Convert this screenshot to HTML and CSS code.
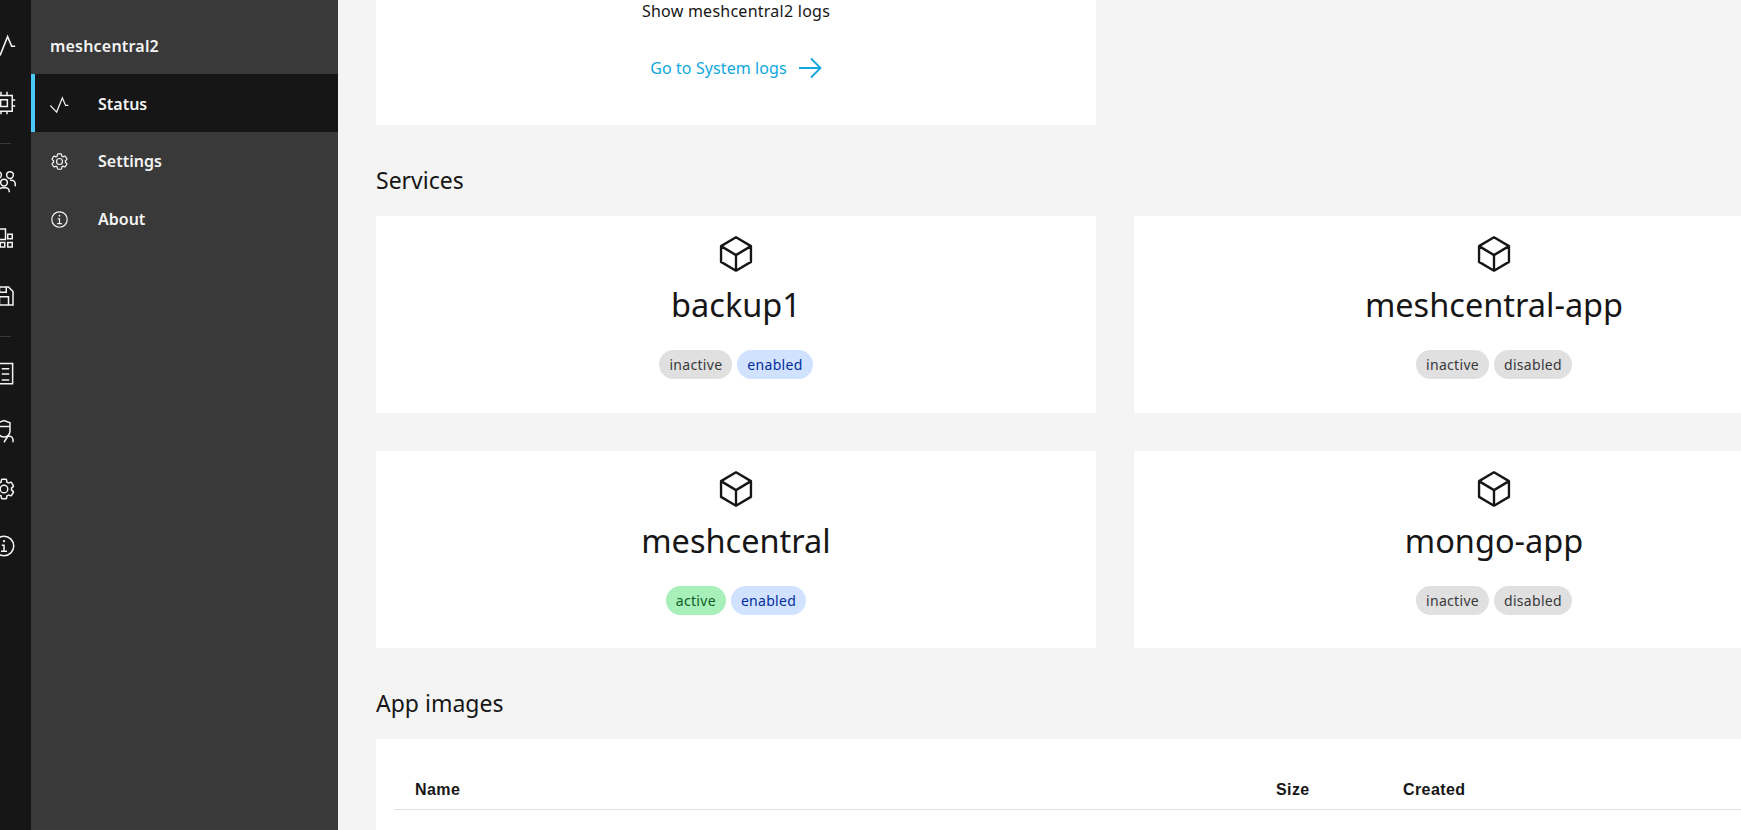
FILE: index.html
```html
<!DOCTYPE html>
<html lang="en">
<head>
<meta charset="utf-8">
<title>meshcentral2</title>
<link rel="stylesheet" href="styles.css">
</head>
<body>
<svg class="defs" width="0" height="0" aria-hidden="true">
  <symbol id="cube" viewBox="0 0 32 32"><path d="M16 1.200 29.300 9V23L16 30.800 2.700 23V9Z M2.700 9 16 17 29.300 9 M16 17V30.800" fill="none" stroke="currentColor" stroke-width="2.100" stroke-linejoin="round"/></symbol>
  <symbol id="activity" viewBox="0 0 20 20"><path d="M0.300 11 7 18 13 3 16.400 11 19.300 11" fill="none" stroke="currentColor" stroke-width="1.300"/></symbol>
  <symbol id="gear" viewBox="0 0 32 32"><path fill="currentColor" d="M27,16.76c0-.25,0-.5,0-.76s0-.51,0-.77l1.92-1.68A2,2,0,0,0,29.3,11L26.94,7a2,2,0,0,0-1.73-1,2,2,0,0,0-.64.1l-2.43.82a11.35,11.35,0,0,0-1.31-.75l-.51-2.52a2,2,0,0,0-2-1.61H13.64a2,2,0,0,0-2,1.61l-.51,2.52a11.48,11.48,0,0,0-1.32.75L7.43,6.06A2,2,0,0,0,6.79,6,2,2,0,0,0,5.06,7L2.7,11a2,2,0,0,0,.41,2.51L5,15.24c0,.25,0,.5,0,.76s0,.51,0,.77L3.11,18.45A2,2,0,0,0,2.7,21L5.06,25a2,2,0,0,0,1.73,1,2,2,0,0,0,.64-.1l2.43-.82a11.35,11.35,0,0,0,1.31.75l.51,2.52a2,2,0,0,0,2,1.61h4.72a2,2,0,0,0,2-1.61l.51-2.52a11.48,11.48,0,0,0,1.32-.75l2.42.82a2,2,0,0,0,.64.1,2,2,0,0,0,1.73-1L29.3,21a2,2,0,0,0-.41-2.51ZM25.21,24l-3.43-1.16a8.86,8.86,0,0,1-2.71,1.57L18.36,28H13.64l-.71-3.55a9.36,9.36,0,0,1-2.7-1.57L6.79,24,4.43,20l2.72-2.4a8.9,8.9,0,0,1,0-3.13L4.43,12,6.79,8l3.43,1.16a8.86,8.86,0,0,1,2.71-1.57L13.64,4h4.72l.71,3.55a9.36,9.36,0,0,1,2.7,1.57L25.21,8,27.57,12l-2.72,2.4a8.9,8.9,0,0,1,0,3.13L27.57,20Z"/><path fill="currentColor" d="M16,22a6,6,0,1,1,6-6A5.94,5.94,0,0,1,16,22Zm0-10a3.91,3.91,0,0,0-4,4,3.91,3.91,0,0,0,4,4,3.91,3.91,0,0,0,4-4A3.91,3.91,0,0,0,16,12Z"/></symbol>
  <symbol id="info" viewBox="0 0 32 32"><path fill="currentColor" d="M17 22v-8h-4v2h2v6h-3v2h8v-2h-3z"/><path fill="currentColor" d="M16 8a1.500 1.500 0 1 0 1.500 1.500A1.500 1.500 0 0 0 16 8z"/><path fill="currentColor" d="M16 30a14 14 0 1 1 14-14 14 14 0 0 1-14 14zm0-26a12 12 0 1 0 12 12A12 12 0 0 0 16 4z"/></symbol>
</svg>

<div class="shell">
  <nav class="rail">
    <a class="rail-item"><svg class="rail-icon"><use href="#activity"/></svg></a>
    <a class="rail-item"><svg class="rail-icon" viewBox="0 0 32 32"><path d="M6 6h21v21H6Z M11.500 11.500h9v9h-9Z M1 12h5 M1 20h5 M27 12h4 M27 20h4 M12 1v5 M20 1v5 M12 27v4 M20 27v4" fill="none" stroke="currentColor" stroke-width="2"/></svg></a>
    <hr class="rail-rule">
    <a class="rail-item"><svg class="rail-icon" viewBox="0 0 32 32"><g fill="none" stroke="currentColor" stroke-width="2"><circle cx="8" cy="8" r="4.500"/><circle cx="24" cy="8" r="4.500"/><circle cx="16" cy="18" r="4.500"/><path d="M9 31v-1a5 5 0 0 1 5-5h4a5 5 0 0 1 5 5v1 M24 15h2a5 5 0 0 1 5 5v3 M8 15H6a5 5 0 0 0-5 5v3"/></g></svg></a>
    <a class="rail-item"><svg class="rail-icon" viewBox="0 0 32 32"><path d="M4 4h14v14H4Z M21 11h6v6h-6Z M21 22h6v6h-6Z M11 22h6v6h-6Z" fill="none" stroke="currentColor" stroke-width="2"/></svg></a>
    <a class="rail-item"><svg class="rail-icon" viewBox="0 0 32 32"><path d="M4 4h18l6 6v18H4Z M10 28V17h12v11 M10 4v7h9V4" fill="none" stroke="currentColor" stroke-width="2"/></svg></a>
    <hr class="rail-rule">
    <a class="rail-item"><svg class="rail-icon" viewBox="0 0 32 32"><path d="M4 2h23.500v27H4Z M5 9h4 M13 9h10 M5 16h4 M13 16h10 M5 24h4 M13 24h10" fill="none" stroke="currentColor" stroke-width="2"/></svg></a>
    <a class="rail-item"><svg class="rail-icon" viewBox="0 0 32 32"><path d="M8 5l8-3 8 3v5H8Z M8 10v6a8 8 0 0 0 16 0v-6 M2 31v-3a5 5 0 0 1 5-5h4 M21 23h2a5 5 0 0 1 5 5v3 M16 31l5-8" fill="none" stroke="currentColor" stroke-width="2"/></svg></a>
    <a class="rail-item"><svg class="rail-icon"><use href="#gear"/></svg></a>
    <a class="rail-item"><svg class="rail-icon"><use href="#info"/></svg></a>
  </nav>

  <aside class="panel">
    <h2 class="panel-title">meshcentral2</h2>
    <a class="panel-link is-active"><svg class="panel-icon"><use href="#activity"/></svg><span>Status</span></a>
    <a class="panel-link"><svg class="panel-icon"><use href="#gear"/></svg><span>Settings</span></a>
    <a class="panel-link"><svg class="panel-icon"><use href="#info"/></svg><span>About</span></a>
  </aside>

  <main class="content">
    <section class="logs-row">
      <div class="logs-card">
        <p class="logs-text">Show meshcentral2 logs</p>
        <a class="logs-link">Go to System logs<svg class="logs-arrow" viewBox="0 0 24 24"><path d="M1 12H22 M13 2.500 22.500 12 13 21.500" fill="none" stroke="currentColor" stroke-width="1.800"/></svg></a>
      </div>
    </section>

    <h3 class="section-title">Services</h3>
    <section class="service-grid">
      <article class="service-card">
        <svg class="cube"><use href="#cube"/></svg>
        <h4 class="service-name">backup1</h4>
        <div class="tags"><span class="tag tag-gray">inactive</span><span class="tag tag-blue">enabled</span></div>
      </article>
      <article class="service-card">
        <svg class="cube"><use href="#cube"/></svg>
        <h4 class="service-name">meshcentral-app</h4>
        <div class="tags"><span class="tag tag-gray">inactive</span><span class="tag tag-gray">disabled</span></div>
      </article>
      <article class="service-card">
        <svg class="cube"><use href="#cube"/></svg>
        <h4 class="service-name">meshcentral</h4>
        <div class="tags"><span class="tag tag-green">active</span><span class="tag tag-blue">enabled</span></div>
      </article>
      <article class="service-card">
        <svg class="cube"><use href="#cube"/></svg>
        <h4 class="service-name">mongo-app</h4>
        <div class="tags"><span class="tag tag-gray">inactive</span><span class="tag tag-gray">disabled</span></div>
      </article>
    </section>

    <h3 class="section-title">App images</h3>
    <section class="images-card">
      <div class="table-head"><span class="col-name">Name</span><span class="col-size">Size</span><span class="col-created">Created</span></div>
    </section>
  </main>
</div>
</body>
</html>
```
FILE: styles.css
```css
* { box-sizing: border-box; }
html, body { margin: 0; height: 100%; overflow: hidden; }
body { background: #f4f4f4; color: #161616; font-family: "Noto Sans", "Open Sans", sans-serif; }
.defs { position: absolute; }
.shell { display: flex; height: 830px; width: 1761px; margin-left: -20px; }
.rail { width: 51px; flex: none; background: #161616; color: #f4f4f4; padding: 31px 3px 0 0; display: flex; flex-direction: column; align-items: center; }
.rail-item { height: 28px; display: flex; align-items: center; justify-content: center; margin-bottom: 29.500px; }
.rail-icon { width: 24px; height: 24px; }
.rail-rule { width: 14px; border: 0; border-top: 1px solid #393939; margin: -3.500px 0 23px; }
.panel { width: 307px; flex: none; background: #393939; color: #f4f4f4; }
.panel-title { margin: 0; height: 74px; padding: 35px 0 0 19px; font-size: 16px; line-height: 22px; font-weight: 600; letter-spacing: .2px; }
.panel-link { height: 58px; display: flex; align-items: center; padding-left: 19px; font-size: 16px; font-weight: 600; }
.panel-link.is-active { background: #161616; border-left: 4px solid #4ac7fb; padding: 2px 0 0 15px; }
.panel-icon { width: 19px; height: 19px; margin-right: 29px; flex: none; }
.content { flex: 1; padding-left: 38px; min-width: 0; }
.logs-card { width: 720px; height: 125px; background: #fff; display: flex; flex-direction: column; align-items: center; }
.logs-text { margin: 0; font-size: 16px; line-height: 22px; letter-spacing: .25px; }
.logs-link { display: flex; align-items: center; gap: 11px; margin-top: 34px; color: #10a8e0; font-size: 16px; line-height: 24px; letter-spacing: .1px; }
.logs-arrow { width: 24px; height: 24px; }
.section-title { margin: 0; font-size: 23px; line-height: 30px; font-weight: 400; padding: 40px 0 21px; }
.service-grid { display: grid; grid-template-columns: 720px 720px; gap: 38px; }
.service-card { height: 197px; background: #fff; display: flex; flex-direction: column; align-items: center; padding-top: 20px; }
.cube { width: 36px; height: 36px; color: #161616; }
.service-name { margin: 11px 0 0; font-size: 32.500px; line-height: 44px; font-weight: 400; }
.service-card:nth-child(n+3) .service-name { margin-top: 12px; }
.tags { display: flex; gap: 5px; margin-top: 23px; }
.tag { height: 29px; padding: 0 10px; border-radius: 15px; font-size: 14px; line-height: 29px; letter-spacing: .3px; }
.tag-gray { background: #e0e0e0; color: #393939; }
.tag-blue { background: #d0e2ff; color: #002d9c; }
.tag-green { background: #a7f0ba; color: #0e6027; }
.images-card { width: 1500px; height: 200px; background: #fff; padding: 36px 0 0 18px; }
.table-head { display: flex; height: 35px; border-bottom: 1px solid #e0e0e0; font-family: "Liberation Sans", Arial, sans-serif; font-size: 16px; font-weight: 700; line-height: 30px; letter-spacing: .4px; }
.col-name { width: 882px; padding-left: 21px; }
.col-size { width: 127px; }
.col-created { width: 200px; }
```
